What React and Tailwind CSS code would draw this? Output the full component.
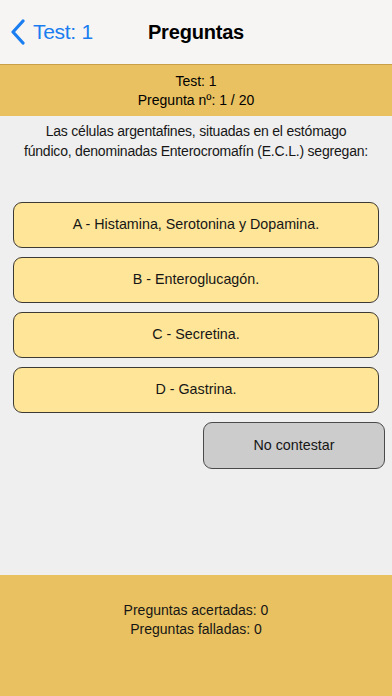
const answers = [
  'A - Histamina, Serotonina y Dopamina.',
  'B - Enteroglucagón.',
  'C - Secretina.',
  'D - Gastrina.',
];

export default function App() {
  return (
    <div className="w-[392px] h-[696px] flex flex-col bg-[#efefef] text-[#161616] overflow-hidden" style={{ fontFamily: '"Liberation Sans", Arial, sans-serif' }}>
      <div className="h-16 shrink-0 bg-[#f6f5f3] relative flex items-center">
        <button className="flex items-center text-[#1a7df0] pl-[10px]">
          <svg width="16" height="26" viewBox="0 0 16 26" fill="none">
            <path d="M13 2 L3 13 L13 24" stroke="#1a7df0" strokeWidth="3.2" strokeLinecap="round" strokeLinejoin="round" />
          </svg>
          <span className="ml-[7px] text-[21px] tracking-[-0.3px]">Test: 1</span>
        </button>
        <div className="absolute left-0 right-0 text-center pointer-events-none text-[20px] font-bold tracking-[-0.2px] text-black">Preguntas</div>
      </div>
      <div className="h-[52px] shrink-0 bg-[#e9c160] border-t border-[#c9a04a] flex flex-col items-center justify-center text-[14px] leading-[19px] text-black">
        <div>Test: 1</div>
        <div>Pregunta nº: 1 / 20</div>
      </div>
      <div className="px-2 pt-[5px] text-center text-[14px] tracking-[-0.2px] leading-[20px]">
        Las células argentafines, situadas en el estómago
        <br />
        fúndico, denominadas Enterocromafín (E.C.L.) segregan:
      </div>
      <div className="mt-[41px] px-[13px] flex flex-col gap-[9px]">
        {answers.map((a) => (
          <button key={a} className="h-[46px] w-full rounded-[9px] bg-[#fee597] border border-[#3d3a33] text-[14.3px]">
            {a}
          </button>
        ))}
      </div>
      <div className="mt-[9px] flex justify-end pr-[7px]">
        <button className="h-[47px] w-[182px] rounded-[9px] bg-[#cccccc] border border-[#4a4a4a] text-[14.3px]">
          No contestar
        </button>
      </div>
      <div className="mt-auto h-[121px] shrink-0 bg-[#e9c160] flex flex-col items-center pt-[26px] text-[14px] leading-[19px]">
        <div>Preguntas acertadas: 0</div>
        <div>Preguntas falladas: 0</div>
      </div>
    </div>
  );
}
